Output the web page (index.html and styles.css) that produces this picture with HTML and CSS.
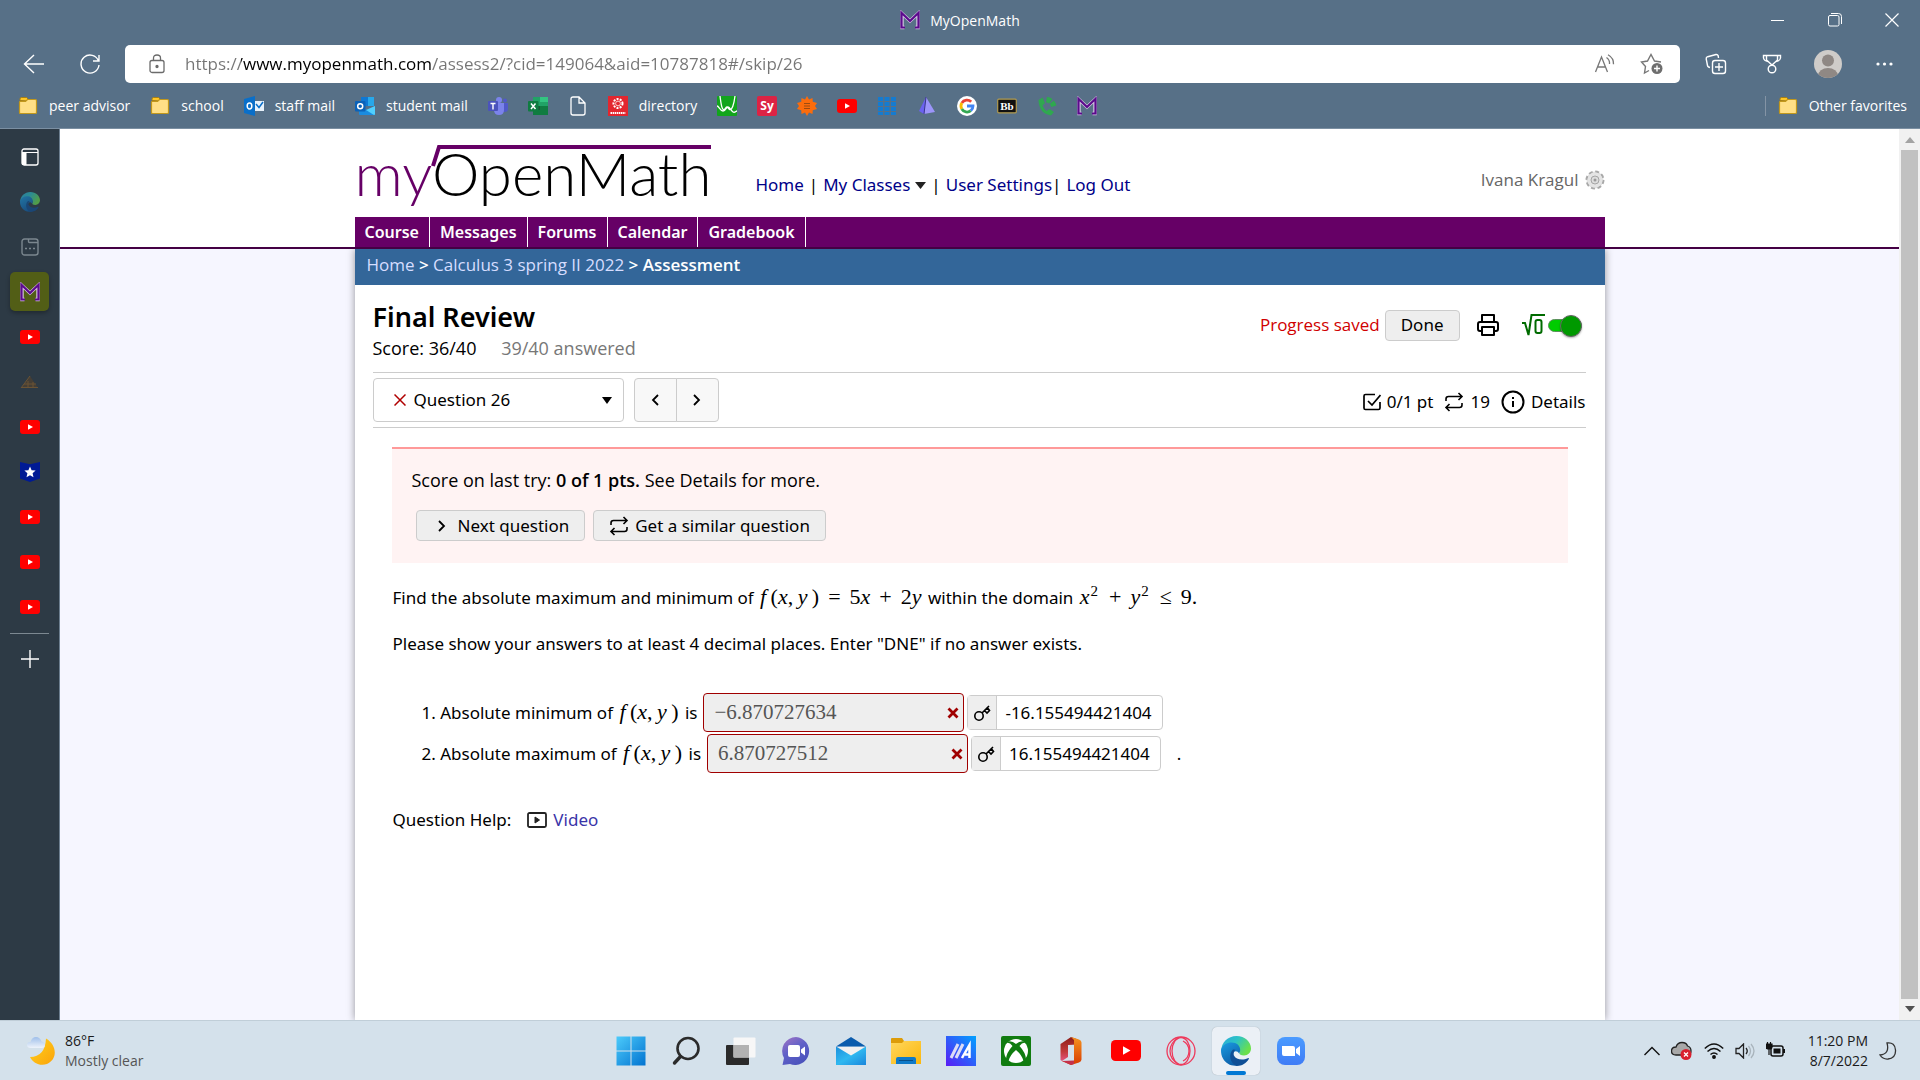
FILE: index.html
```html
<!DOCTYPE html>
<html lang="en">
<head>
    <meta charset="UTF-8">
    <meta name="viewport" content="width=device-width, initial-scale=1.0">
    <title>MyOpenMath</title>
    <link rel="stylesheet" href="styles.css">
</head>
<body>
    <!-- shared icons -->
    <svg class="defs" aria-hidden="true">
        <defs>
            <linearGradient id="edgeBlue" x1="0" y1="0" x2="0.6" y2="1">
                <stop offset="0" stop-color="#1b9de2"/><stop offset="1" stop-color="#0c59a4"/>
            </linearGradient>
            <linearGradient id="edgeGreen" x1="0" y1="0" x2="1" y2="0.5">
                <stop offset="0" stop-color="#2aa7dc"/><stop offset="0.5" stop-color="#2cc3c6"/><stop offset="1" stop-color="#6be04b"/>
            </linearGradient>
            <linearGradient id="winBlue" x1="0" y1="0" x2="1" y2="1">
                <stop offset="0" stop-color="#4ccbfb"/><stop offset="1" stop-color="#0273d0"/>
            </linearGradient>
            <linearGradient id="chatPurple" x1="0" y1="0" x2="0.6" y2="1">
                <stop offset="0" stop-color="#a475c4"/><stop offset="0.5" stop-color="#6161c8"/><stop offset="1" stop-color="#4b53bc"/>
            </linearGradient>
            <linearGradient id="mailBlue" x1="0" y1="0" x2="1" y2="1">
                <stop offset="0" stop-color="#1c8fdc"/><stop offset="0.5" stop-color="#2fb8f0"/><stop offset="1" stop-color="#1a86dc"/>
            </linearGradient>
            <linearGradient id="folderGold" x1="0" y1="0" x2="1" y2="1">
                <stop offset="0" stop-color="#ffd75e"/><stop offset="1" stop-color="#fbb70c"/>
            </linearGradient>
            <linearGradient id="pcBlue" x1="1" y1="0" x2="0" y2="1">
                <stop offset="0" stop-color="#00a2ff"/><stop offset="1" stop-color="#5a1bf5"/>
            </linearGradient>
            <linearGradient id="officeRed" x1="0" y1="0" x2="0" y2="1">
                <stop offset="0" stop-color="#8c1d18"/><stop offset="0.6" stop-color="#c23a3a"/><stop offset="1" stop-color="#e3547c"/>
            </linearGradient>
            <linearGradient id="officeOrange" x1="0" y1="0" x2="0" y2="1">
                <stop offset="0" stop-color="#f5941f"/><stop offset="1" stop-color="#d83b01"/>
            </linearGradient>
            <linearGradient id="zoomBlue" x1="0" y1="0" x2="0" y2="1">
                <stop offset="0" stop-color="#4a9bff"/><stop offset="1" stop-color="#3f7cf6"/>
            </linearGradient>
            <linearGradient id="moonGold" x1="0" y1="0" x2="1" y2="1">
                <stop offset="0" stop-color="#ffd21e"/><stop offset="1" stop-color="#fba30a"/>
            </linearGradient>
            <linearGradient id="cloudBlue" x1="0" y1="0" x2="0" y2="1">
                <stop offset="0" stop-color="#9fbfea"/><stop offset="1" stop-color="#eef3fb"/>
            </linearGradient>
        </defs>
        <symbol id="folder" viewBox="0 0 20 20">
            <path d="M2 4.500V3q0-1.500 1.500-1.500h5L10 3v2z" fill="#ffc727" stroke="#a98013"/>
            <path d="M2 5.500h5.500L9.500 3.500H17.500q1 0 1 1V16.500q0 1-1 1H2.500q-1 0-1-1V6q0-.5.5-.5z" fill="#ffdf86" stroke="#c1971c" stroke-width="1.200"/>
        </symbol>
        <symbol id="youtube" viewBox="0 0 30 21">
            <rect width="30" height="21" rx="4.500" fill="#f00"/>
            <path d="M12 6.200v8.600l7.500-4.300z" fill="#fff"/>
        </symbol>
        <symbol id="mom" viewBox="0 0 20 18">
            <path d="M4.500 16.500H2V2.500L10 10l8-7.500v14h-2.500" fill="none" stroke="#d9c9e6" stroke-width="3.400"/>
            <path d="M5 16.500H1.500V1.800L10 10l8.500-8.200v14.700H15" fill="none" stroke="#5b0a8c" stroke-width="2.200"/>
        </symbol>
        <symbol id="edge" viewBox="0 0 30 30">
            <path d="M.2 15C.2 6.500 7 0 15.500 0 24 0 30 6 30 12.500c0 4-3 7-7 7-3 0-5-1-4.500-2.500 1.500-3-.5-6.500-4.500-6.500C6 10.500 0 14 .2 15z" fill="url(#edgeGreen)"/>
            <path d="M.1 13.500C1.500 9 6 6.500 10.500 6.500c6 0 9.500 4 8.500 9-.3 1-.8 1.500-.6 2.200C16 14 12.500 14.500 12 18.500c-.5 6 6 9.500 11.500 8.300C15.500 32 6 30 2 22.500.3 19.500-.2 16 .1 13.500z" fill="url(#edgeBlue)"/>
            <path d="M12 13.500c-5 5-3 13.500 3.500 16.400 5.500 0 10-2.800 12.300-7 .3-.7-.3-1-1-.7-5 2.600-12 1.500-14-3-.6-2 .2-4.500 1.700-5.400z" fill="#0f4f96"/>
        </symbol>
        <symbol id="retry" viewBox="0 0 20 20">
            <path d="M2 9V7q0-2.500 2.500-2.500H18M14.500 1l3.500 3.500L14.500 8M18 11v2q0 2.500-2.500 2.500H2M5.500 12L2 15.500 5.500 19" fill="none" stroke="#000" stroke-width="1.600"/>
        </symbol>
        <symbol id="key" viewBox="0 0 18 18">
            <circle cx="6" cy="12" r="4.200" fill="none" stroke="#000" stroke-width="1.600"/>
            <path d="M9 9l7-7M11.500 6.500l2.500 2.500 2.500-2.500-2-2.500z" fill="none" stroke="#000" stroke-width="1.600"/>
        </symbol>
        <symbol id="wrong" viewBox="0 0 12 12">
            <path d="M1.500 1.500l9 9M10.500 1.500l-9 9" stroke="#a00000" stroke-width="2.800"/>
        </symbol>
    </svg>

    <header class="browser">
        <div class="titlebar">
            <div class="tab-title">
                <svg class="icon20"><use href="#mom"/></svg>
                <span>MyOpenMath</span>
            </div>
            <div class="window-controls">
                <button type="button" aria-label="Minimize"><svg width="13" height="13"><path d="M0 6.500h13" stroke="#fff"/></svg></button>
                <button type="button" aria-label="Restore"><svg width="14" height="14" fill="none" stroke="#fff"><rect x=".5" y="2.500" width="10.500" height="10.500" rx="1.500"/><path d="M3 .5h7.500q3 0 3 3V11"/></svg></button>
                <button type="button" aria-label="Close"><svg width="14" height="14"><path d="M.5.5l13 13M13.500.5l-13 13" stroke="#fff" stroke-width="1.200"/></svg></button>
            </div>
        </div>

        <div class="toolbar">
            <button type="button" class="tool" aria-label="Back"><svg width="22" height="20" fill="none" stroke="#fff" stroke-width="1.400"><path d="M21 10H1.500M11 1L1.500 10l9.500 9"/></svg></button>
            <button type="button" class="tool" aria-label="Refresh"><svg width="22" height="22" fill="none" stroke="#fff" stroke-width="1.400"><path d="M19.500 8A9 9 0 1 0 20 12M20 2v6h-6"/></svg></button>
            <div class="address">
                <svg class="lock" width="16" height="20" fill="none" stroke="#6b6b6b" stroke-width="1.300"><rect x="1" y="6.500" width="14" height="12" rx="2"/><path d="M4.500 6.500V4q0-3 3.500-3t3.500 3v2.500"/><circle cx="8" cy="12.500" r="1" fill="#6b6b6b"/></svg>
                <input type="text" class="url" aria-label="Address" value="https://www.myopenmath.com/assess2/?cid=149064&amp;aid=10787818#/skip/26">
                <svg width="22" height="20" fill="none" stroke="#777" stroke-width="1.300"><path d="M1.500 18L7.500 3l6 15M3.500 13h8M12.500 3.500q3.500 2.500 3 6.500M14 .8q6 3.500 5.500 9.500"/></svg>
                <svg class="star" width="24" height="22" fill="none" stroke="#777" stroke-width="1.400"><path d="M9 17.500L4.500 20l1-6.500L1.500 9l6-1L11 1.500 14.500 8l6.500 1"/><circle cx="17" cy="15.500" r="5.500" fill="#6e6e6e" stroke="none"/><path d="M17 12.500v6M14 15.500h6" stroke="#fff"/></svg>
            </div>
            <button type="button" class="tool" aria-label="Collections"><svg width="22" height="22" fill="none" stroke="#fff" stroke-width="1.400"><rect x="7.500" y="7.500" width="13" height="13" rx="2.500"/><path d="M14 10v8M10 14h8M5 14.500L3.500 14q-.8-.5-1-1.500L1.200 6q-.2-1.800 1.500-2.300L11 1.500q1.600-.2 2.200 1.300L13.500 5"/></svg></button>
            <button type="button" class="tool" aria-label="Rewards"><svg width="20" height="20" fill="none" stroke="#fff" stroke-width="1.400"><path d="M4.500 1.500h11V6L10 11 4.500 6zM4.500 1.500h-3V4q.5 3 4.500 3.500M15.500 1.500h3V4q-.5 3-4.500 3.500"/><circle cx="10" cy="15" r="3.800"/></svg></button>
            <button type="button" class="tool" aria-label="Profile"><svg width="28" height="28"><clipPath id="face"><circle cx="14" cy="14" r="14"/></clipPath><g clip-path="url(#face)"><rect width="28" height="28" fill="#cfccc9"/><circle cx="14" cy="10.500" r="6" fill="#8f8884"/><ellipse cx="14" cy="26" rx="10" ry="8" fill="#8f8884"/></g></svg></button>
            <button type="button" class="tool" aria-label="More"><svg width="17" height="4" fill="#fff"><circle cx="2" cy="2" r="1.600"/><circle cx="8.500" cy="2" r="1.600"/><circle cx="15" cy="2" r="1.600"/></svg></button>
        </div>

        <nav class="favorites">
            <a href="#"><svg class="icon20"><use href="#folder"/></svg>peer advisor</a>
            <a href="#"><svg class="icon20"><use href="#folder"/></svg>school</a>
            <a href="#"><svg class="icon20" viewBox="0 0 20 20"><path d="M0 3l11-3v20L0 17z" fill="#0a6fc9"/><path d="M11 5h9v10h-9z" fill="#e8f2fb"/><path d="M12 8l3 3.500L19 6" fill="none" stroke="#0a6fc9" stroke-width="1.500"/><ellipse cx="5.500" cy="10" rx="2.300" ry="3" fill="none" stroke="#fff" stroke-width="1.500"/></svg>staff mail</a>
            <a href="#"><svg class="icon20" viewBox="0 0 20 20"><path d="M6 1h13v9H6z" fill="#28a8ea"/><path d="M6 1h7v9H6z" fill="#0f78d4"/><path d="M4 10l8 4 8-4v8q0 1-1 1H5q-1 0-1-1z" fill="#1a8ce0"/><path d="M20 10v8q0 1-1 1L11 14z" fill="#50d0ff"/><rect y="5" width="10.500" height="10.500" rx="1" fill="#0b62b8"/><circle cx="5.200" cy="10.200" r="2.500" fill="none" stroke="#fff" stroke-width="1.500"/></svg>student mail</a>
            <a href="#" aria-label="Teams"><svg class="icon20" viewBox="0 0 20 20"><circle cx="11" cy="4" r="3" fill="#7b83eb"/><circle cx="17" cy="4.500" r="2" fill="#5059c9"/><path d="M13 7h7v6q0 3-3.500 3H13z" fill="#5059c9"/><path d="M6 7h10v7q0 5-5 5t-5-5z" fill="#7b83eb"/><rect y="5" width="10" height="10" rx="1" fill="#4b53bc"/><path d="M2.500 7.500h5M5 7.500v6" stroke="#fff" stroke-width="1.400"/></svg></a>
            <a href="#" aria-label="Excel"><svg class="icon20" viewBox="0 0 20 20"><path d="M5 1h7v9H5z" fill="#21a366"/><path d="M12 1h8v5h-8z" fill="#33c481"/><path d="M12 6h8v4h-8z" fill="#21a366"/><path d="M5 10h15v9H5z" fill="#107c41"/><path d="M5 10h7v4H5z" fill="#185c37"/><rect y="5" width="10.500" height="10.500" rx="1" fill="#107c41"/><path d="M3 7.500l4.500 5.500M7.500 7.500L3 13" stroke="#fff" stroke-width="1.500"/></svg></a>
            <a href="#" aria-label="Page"><svg class="icon20" viewBox="0 0 20 20"><path d="M3 3q0-2 2-2h6l6 6v10q0 2-2 2H5q-2 0-2-2zM11 1v6h6" fill="none" stroke="#fff" stroke-width="1.300"/></svg></a>
            <a href="#"><svg class="icon20" viewBox="0 0 20 20"><rect width="20" height="20" fill="#e3262e"/><circle cx="10" cy="7.500" r="4.500" fill="none" stroke="#fff" stroke-width="2" stroke-dasharray="2 1.200"/><circle cx="10" cy="7.500" r="2.400" fill="none" stroke="#fbd0d0"/><path d="M2.500 17h15" stroke="#fff" stroke-width="2.200" stroke-dasharray="1.500 .6"/></svg>directory</a>
            <a href="#" aria-label="Desmos"><svg class="icon20" viewBox="0 0 20 20"><rect width="20" height="20" rx="1" fill="#12a51c"/><path d="M3 0c1 8 2 15 4.500 13.500C9 12 9 11 10 11s1 1.500 2.500 2.500C15 15 17 8 18 0M0 10c2 0 3 5 6 5s3-4 5-4 3 4 5 5 3-1 4-1" fill="none" stroke="#fff" stroke-width="1.300"/></svg></a>
            <a href="#" aria-label="Symbolab"><svg class="icon20" viewBox="0 0 20 20"><rect width="20" height="20" rx="2" fill="#dc2344"/><text x="10" y="14" text-anchor="middle" class="sy">Sy</text></svg></a>
            <a href="#" aria-label="Wolfram Alpha"><svg class="icon20" viewBox="0 0 20 20"><path d="M10 0l2 3.500L15.500 2l.3 3.800L20 7l-2 3 2 3-4.200 1.200-.3 3.800L12 16.500 10 20l-2-3.500L4.500 18l-.3-3.800L0 13l2-3-2-3 4.200-1.200L4.500 2 8 3.500z" fill="#fb6c0c"/><path d="M7 7.500h6M7 10h6M7 12.500h6" stroke="#9c4a10" stroke-width="1.200"/></svg></a>
            <a href="#" aria-label="YouTube"><svg class="icon20"><use href="#youtube"/></svg></a>
            <a href="#" aria-label="Grid"><svg class="icon20" viewBox="0 0 20 20"><path d="M3.500 1v18M10 1v18M16.500 1v18" stroke="#157bd0" stroke-width="5" stroke-dasharray="4 1"/></svg></a>
            <a href="#" aria-label="Pyramid"><svg class="icon20" viewBox="0 0 20 20"><path d="M9 1L2 15l5 3z" fill="#6b62f0"/><path d="M9 1l9 15-11 2z" fill="#9c95fa"/><path d="M9 1L7 18" stroke="#3a3590"/></svg></a>
            <a href="#" aria-label="Google"><svg class="icon20" viewBox="0 0 20 20"><circle cx="10" cy="10" r="10" fill="#fff"/><g fill="none" stroke-width="2.800"><path d="M14.200 5.800A6 6 0 0 0 4.800 7" stroke="#ea4335"/><path d="M4.800 7a6 6 0 0 0 0 6" stroke="#fbbc05"/><path d="M4.800 13a6 6 0 0 0 9 1.700" stroke="#34a853"/><path d="M13.800 14.700A6 6 0 0 0 16 10h-6" stroke="#4285f4"/></g></svg></a>
            <a href="#" aria-label="Blackboard"><svg class="icon20" viewBox="0 0 20 20"><rect x=".7" y="3.200" width="18.600" height="13.600" rx="1" fill="#111" stroke="#b19a4f" stroke-width="1.200"/><text x="10" y="14" text-anchor="middle" class="bb">Bb</text></svg></a>
            <a href="#" aria-label="Phone"><svg class="icon20" viewBox="0 0 20 20"><path d="M1.500 4L5.500 1.500 8 7 5.500 9.500q1.500 3.500 4 5.500l3-2 4.500 3-3 3.500Q2 17.500 1.500 4z" fill="#2fa84f"/><path d="M9.500 3.500q6 1 7.500 7.500" fill="none" stroke="#2fa84f" stroke-width="5.500" stroke-dasharray="4.500 1.500"/></svg></a>
            <a href="#" aria-label="MyOpenMath"><svg class="icon20"><use href="#mom"/></svg></a>
            <a href="#" class="other"><svg class="icon20"><use href="#folder"/></svg>Other favorites</a>
        </nav>
    </header>

    <div class="workspace">
        <aside class="tabs">
            <button type="button" aria-label="Tab actions"><svg width="18" height="18" viewBox="0 0 18 18"><rect x="1" y="1" width="16" height="16" rx="2" fill="none" stroke="#fff" stroke-width="1.300"/><path d="M1 4.500h16M3 5v12" stroke="#fff"/><path d="M1 5h4.500v12H1z" fill="#fff"/></svg></button>
            <button type="button" class="asleep" aria-label="Edge"><svg class="icon20"><use href="#edge"/></svg></button>
            <button type="button" aria-label="New tab"><svg width="18" height="18" fill="none" stroke="#7b878f" stroke-width="1.400"><rect x="1" y="1" width="16" height="16" rx="2.500"/><path d="M7.500 1v2.500q0 1 1 1H17M4 10.500h2M8 10.500h2M12 10.500h2"/></svg></button>
            <button type="button" class="active" aria-label="MyOpenMath"><svg class="icon20"><use href="#mom"/></svg></button>
            <button type="button" aria-label="YouTube"><svg class="icon20"><use href="#youtube"/></svg></button>
            <button type="button" aria-label="Pyramids"><svg width="20" height="16"><path d="M1 14L10 2l8 12z" fill="#453e35"/><path d="M1 14L10 2M4 10h12M1 13.500h17M8 7v6M13 8v5" stroke="#6a5334" fill="none"/></svg></button>
            <button type="button" aria-label="YouTube"><svg class="icon20"><use href="#youtube"/></svg></button>
            <button type="button" aria-label="Badge"><svg class="icon20" viewBox="0 0 20 20"><path d="M0 0l10 2.200L20 0v16.500L10 20 0 16.500z" fill="#001a94"/><path d="M10 4.500l1.600 3.800 4 .3-3 2.700.9 4L10 13.200l-3.500 2.100.9-4-3-2.700 4-.3z" fill="#fff"/></svg></button>
            <button type="button" aria-label="YouTube"><svg class="icon20"><use href="#youtube"/></svg></button>
            <button type="button" aria-label="YouTube"><svg class="icon20"><use href="#youtube"/></svg></button>
            <button type="button" aria-label="YouTube"><svg class="icon20"><use href="#youtube"/></svg></button>
            <hr>
            <button type="button" aria-label="Add tab"><svg width="18" height="18"><path d="M0 9h18M9 0v18" stroke="#fff" stroke-width="1.400"/></svg></button>
        </aside>

        <main class="page">
            <div class="page-head">
                <div class="wrap">
                    <div class="brand-row">
                        <a href="#" class="logo"><svg class="radical" viewBox="0 0 280 24"><path d="M2 22L8 3H280" fill="none" stroke="#660066" stroke-width="4"/></svg><span>my</span>OpenMath</a>
                        <div class="links">
                            <a href="#">Home</a> <span>|</span>
                            <a href="#" class="drop">My Classes <svg width="11" height="7"><path d="M0 0h11L5.500 7z" fill="#222"/></svg></a>
                            <span>|</span> <span><a href="#">User Settings</a>|</span> <a href="#">Log Out</a>
                        </div>
                        <div class="user">Ivana Kragul
                            <svg width="20" height="20" viewBox="0 0 20 20"><circle cx="10" cy="10" r="8.500" fill="#e0e0e0" stroke="#a8a8a8" stroke-width="2" stroke-dasharray="4 2.670"/><circle cx="10" cy="10" r="7.500" fill="#e4e4e4"/><circle cx="10" cy="10" r="4" fill="#ddd" stroke="#a5a5a5"/><circle cx="10" cy="10" r="1.500" fill="#999"/></svg>
                        </div>
                    </div>
                    <nav class="course-nav">
                        <a href="#">Course</a><a href="#">Messages</a><a href="#">Forums</a><a href="#">Calendar</a><a href="#">Gradebook</a>
                    </nav>
                </div>
            </div>

            <div class="wrap sheet">
                <div class="breadcrumb"><a href="#">Home</a> &gt; <a href="#">Calculus 3 spring II 2022</a> &gt; Assessment</div>
                <div class="assess">
                    <div class="assess-head">
                        <div>
                            <h1>Final Review</h1>
                            <p class="score">Score: 36/40 <span>39/40 answered</span></p>
                        </div>
                        <div class="assess-tools">
                            <span class="saved">Progress saved</span>
                            <button type="button" class="btn">Done</button>
                            <button type="button" class="plain" aria-label="Print"><svg width="24" height="24" viewBox="0 0 24 24" fill="none" stroke="#000" stroke-width="2" stroke-linejoin="round"><path d="M6 9V2h12v7M6 18H4a2 2 0 0 1-2-2v-5a2 2 0 0 1 2-2h16a2 2 0 0 1 2 2v5a2 2 0 0 1-2 2h-2"/><rect x="6" y="14" width="12" height="8"/></svg></button>
                            <label class="mq"><svg width="24" height="24" fill="none" stroke="#006b00" stroke-width="2"><path d="M1 10h3l3.500 12L10.500 2H24"/><rect x="14.500" y="7" width="6" height="13" rx="2"/></svg><input type="checkbox" checked aria-label="Equation editor"></label>
                        </div>
                    </div>

                    <div class="question-bar">
                        <div class="picker">
                            <svg class="mark" width="12" height="12"><path d="M.5.5l11 11M11.500.5l-11 11" stroke="#b00000" stroke-width="1.500"/></svg>
                            <select aria-label="Question"><option>Question 26</option></select>
                            <svg class="caret" width="10" height="7"><path d="M0 0h10L5 7z"/></svg>
                        </div>
                        <div class="pager">
                            <button type="button" aria-label="Previous"><svg width="8" height="12"><path d="M7 1L2 6l5 5" fill="none" stroke="#000" stroke-width="1.800"/></svg></button><button type="button" aria-label="Next"><svg width="8" height="12"><path d="M1 1l5 5-5 5" fill="none" stroke="#000" stroke-width="1.800"/></svg></button>
                        </div>
                        <div class="meta">
                            <svg width="18" height="18" fill="none" stroke="#000" stroke-width="1.700"><path d="M17 9v6q0 1.500-1.500 1.500h-13Q1 16.500 1 15V3q0-1.500 1.500-1.500H12M5 8l4 4 8.500-10"/></svg>
                            <span>0/1 pt</span>
                            <svg class="tries" width="20" height="20"><use href="#retry"/></svg>
                            <span>19</span>
                            <button type="button" class="plain details"><svg width="24" height="24" fill="none" stroke="#000" stroke-width="2"><circle cx="12" cy="12" r="10.500"/><path d="M12 11v6M12 7v2"/></svg>Details</button>
                        </div>
                    </div>

                    <div class="notice">
                        <p>Score on last try: <b>0 of 1 pts.</b> See Details for more.</p>
                        <div class="actions">
                            <button type="button" class="btn"><svg class="chev" width="8" height="12"><path d="M1 1l5 5-5 5" fill="none" stroke="#000" stroke-width="1.800"/></svg>Next question</button>
                            <button type="button" class="btn"><svg width="20" height="20"><use href="#retry"/></svg>Get a similar question</button>
                        </div>
                    </div>

                    <div class="question">
                        <p>Find the absolute maximum and minimum of <span class="math"><i>f</i>&thinsp;(<i>x</i>,&thinsp;<i>y</i>&thinsp;)<span class="op">=</span>5<i>x</i><span class="op">+</span>2<i>y</i></span> within the domain <span class="math"><i>x</i><sup>2</sup><span class="op">+</span><i>y</i><sup>2</sup><span class="op">≤</span>9.</span></p>
                        <p>Please show your answers to at least 4 decimal places. Enter "DNE" if no answer exists.</p>
                        <ol class="answers">
                            <li>
                                <label for="ans1">1. Absolute minimum of <span class="math"><i>f</i>&thinsp;(<i>x</i>,&thinsp;<i>y</i>&thinsp;)</span> is</label>
                                <div class="answer"><input type="text" id="ans1" value="−6.870727634" readonly><svg width="12" height="12"><use href="#wrong"/></svg></div>
                                <div class="solution"><span class="key"><svg width="18" height="18"><use href="#key"/></svg></span><span>-16.155494421404</span></div>
                            </li>
                            <li>
                                <label for="ans2">2. Absolute maximum of <span class="math"><i>f</i>&thinsp;(<i>x</i>,&thinsp;<i>y</i>&thinsp;)</span> is</label>
                                <div class="answer"><input type="text" id="ans2" value="6.870727512" readonly><svg width="12" height="12"><use href="#wrong"/></svg></div>
                                <div class="solution"><span class="key"><svg width="18" height="18"><use href="#key"/></svg></span><span>16.155494421404</span></div>
                                <span class="stop">.</span>
                            </li>
                        </ol>
                        <p class="help">Question Help: <a href="#"><svg width="20" height="16" fill="none" stroke="#222" stroke-width="1.800"><rect x="1" y="1" width="18" height="14" rx="1.500"/><path d="M8 5v6l4.500-3z" fill="#222" stroke-width="1"/></svg>Video</a></p>
                    </div>
                </div>
            </div>
        </main>

        <div class="scrollbar">
            <svg width="10" height="6"><path d="M0 6h10L5 0z" fill="#a3a3a3"/></svg>
            <div class="thumb"></div>
            <svg width="10" height="6"><path d="M0 0h10L5 6z" fill="#505050"/></svg>
        </div>
    </div>

    <footer class="taskbar">
        <div class="weather">
            <svg width="28" height="28" viewBox="0 0 28 28"><path d="M19 1.500C30 8 31 22 20 27 13 29.500 6 26 3 20q15 0 16-18.500z" fill="url(#moonGold)"/><path d="M4 11q-4 0-4-3t3.500-3Q5 0 9 0t5.500 4.500Q18 5 18 8t-3.500 3z" fill="url(#cloudBlue)"/></svg>
            <div><span>86°F</span><span class="sub">Mostly clear</span></div>
        </div>
        <div class="apps">
            <button type="button" aria-label="Start"><svg width="30" height="30"><path d="M.5.5h14v14H.5zM15.500.5h14v14h-14zM.5 15.500h14v14H.5zM15.500 15.500h14v14h-14z" fill="url(#winBlue)"/></svg></button>
            <button type="button" aria-label="Search"><svg width="30" height="30" fill="none" stroke="#2b2b2b" stroke-linecap="round"><circle cx="17" cy="12.500" r="10.500" stroke-width="2.600"/><path d="M9.500 20.500l-6 6.500" stroke-width="3.400"/></svg></button>
            <button type="button" aria-label="Task view"><svg width="30" height="30"><rect x="0" y="9" width="23" height="20" rx="1" fill="#2a2a2a"/><rect x="7.500" y="1.500" width="22" height="20" rx="1" fill="#f7f7f7"/><rect x="7.500" y="9" width="15.500" height="12.500" fill="#b2b2b2"/></svg></button>
            <button type="button" aria-label="Chat"><svg width="30" height="30"><path d="M15 1a14 14 0 1 1-6 27l-7.500 1L3 22A14 14 0 0 1 15 1z" fill="url(#chatPurple)"/><rect x="7" y="9" width="12" height="12" rx="2" fill="#fff"/><path d="M20 13.500l4-3v9l-4-3z" fill="#fff"/></svg></button>
            <button type="button" aria-label="Mail"><svg width="30" height="30"><path d="M0 10.500L15 1l15 9.500z" fill="#0b5cad"/><path d="M2 11h26L15 21z" fill="#f1f1f1"/><path d="M0 10.500l15 9 15-9V29H0z" fill="url(#mailBlue)"/></svg></button>
            <button type="button" aria-label="File Explorer"><svg width="30" height="30"><path d="M0 3q0-1 1-1h10l2 3v3H0z" fill="#dd9c09"/><path d="M0 7h11l2-2h17v23H0z" fill="url(#folderGold)"/><path d="M5 28v-5q0-2 2-2h16q2 0 2 2v5z" fill="#0f7ac8"/><path d="M8 24.500h14" stroke="#084f87"/></svg></button>
            <button type="button" aria-label="Optimizer"><svg width="30" height="30"><rect width="30" height="30" fill="url(#pcBlue)"/><path d="M5 22l7-14M10 22l7-14" stroke="#dcdcf6" stroke-width="3"/><path d="M16 22l7.500-13v13M19 18.500h4" fill="none" stroke="#fff" stroke-width="2.500"/></svg></button>
            <button type="button" aria-label="Xbox"><svg width="30" height="30"><rect width="30" height="30" rx="2" fill="#107c10"/><circle cx="15" cy="15" r="12" fill="#fff"/><path d="M7 5.500q4-1 8 2.500 4-3.500 8-2.500l1.500 1.500q-3-1-6 3 6 6.500 6.500 13l-2.500 2Q21 19 15 14 9 19 7.500 25L5 23q.5-6.500 6.500-13-3-4-6-3z" fill="#107c10"/></svg></button>
            <button type="button" aria-label="Office"><svg width="30" height="30"><path d="M15 1l7 2.500v5L12 9v12l-6 4-1.500-1V8z" fill="url(#officeRed)"/><path d="M15 1l8 2.500q2.500 1 2.500 3v17q0 2-2.500 3L15 29l-9-4h12V4z" fill="url(#officeOrange)"/><path d="M6 25l9 4 3-1v-3.500z" fill="#c4314b"/></svg></button>
            <button type="button" aria-label="YouTube"><svg width="30" height="21"><use href="#youtube"/></svg></button>
            <button type="button" aria-label="Opera GX"><svg width="30" height="30" fill="none" stroke="#ee3a5c" stroke-width="1.300"><circle cx="15" cy="15" r="14"/><ellipse cx="15" cy="15" rx="9" ry="13.500"/><path d="M17 5q6 3 6 10t-6 10M13 1.500q-9 5-9 13.500t9 13.500"/></svg></button>
            <button type="button" class="current" aria-label="Edge"><svg width="30" height="30"><use href="#edge"/></svg></button>
            <button type="button" aria-label="Zoom"><svg width="28" height="28"><rect width="28" height="28" rx="8" fill="url(#zoomBlue)"/><path d="M5 9h11q2 0 2 2v8H7q-2 0-2-2zM19 12l4-3v10l-4-3z" fill="#fff"/></svg></button>
        </div>
        <div class="tray">
            <svg width="16" height="10"><path d="M.5 9L8 1.500 15.500 9" fill="none" stroke="#111" stroke-width="1.400"/></svg>
            <svg width="22" height="20"><path d="M5 14q-4.500 0-4.500-4T5 6q1.500-4.500 6-4.500T16.500 5Q20 6 20 10q0 4-3 4z" fill="#a8a8a8" stroke="#222" stroke-width="1.300"/><circle cx="15" cy="13.500" r="5.500" fill="#d9202e"/><path d="M13 11.500l4 4M17 11.500l-4 4" stroke="#fff" stroke-width="1.300"/></svg>
            <svg width="20" height="16" fill="none" stroke="#111" stroke-width="1.500"><path d="M.8 5.500q9.200-9 18.400 0M3.500 8.500q6.500-6 13 0M6.500 11.500q3.500-3 7 0"/><circle cx="10" cy="14" r="1.200" fill="#111"/></svg>
            <svg width="20" height="16" fill="none" stroke="#222" stroke-width="1.300"><path d="M1 5.500h3L8.500 1v14L4 10.500H1zM11 5q2.500 3 0 6"/><path d="M13.500 3q4 5 0 10M16 1q6 7 0 14" stroke="#a9b4bc"/></svg>
            <svg width="20" height="18"><rect x="5" y="4" width="12" height="10" rx="2" fill="none" stroke="#111" stroke-width="1.500"/><rect x="7.500" y="6.500" width="7" height="5" fill="#111"/><path d="M18 7v4" stroke="#111" stroke-width="2"/><path d="M0 2h6v3q0 2-3 2T0 5zM1.500 0v2M4.500 0v2M3 7v6" stroke="#111" fill="#111" stroke-width="1.200"/></svg>
            <div class="clock"><span>11:20 PM</span><span>8/7/2022</span></div>
            <svg width="18" height="18"><path d="M8 1q8-1 8.500 7T9 17q-5 .5-8-4 10-1 7-12z" fill="none" stroke="#333" stroke-width="1.300"/></svg>
        </div>
    </footer>
</body>
</html>
```
FILE: styles.css
```css
* {
    box-sizing: border-box;
}

body {
    margin: 0;
    height: 100vh;
    display: flex;
    flex-direction: column;
    overflow: hidden;
    font-family: "Open Sans", sans-serif;
    font-size: 14px;
}

svg {
    display: block;
    flex: none;
}

button {
    font: inherit;
    color: inherit;
    padding: 0;
    border: 0;
    background: none;
    display: flex;
    align-items: center;
    justify-content: center;
}

a {
    text-decoration: none;
}

.defs {
    position: absolute;
    width: 0;
    height: 0;
}

.icon20 {
    width: 20px;
    height: 20px;
}

/* browser chrome */
.browser {
    background-color: #577087;
    color: white;
    border-bottom: 1px solid #7b8fa2;
    flex: none;
}

.titlebar {
    display: grid;
    grid-template-columns: 1fr auto 1fr;
    height: 40px;
}

.tab-title {
    grid-column: 2;
    display: flex;
    align-items: center;
    gap: 10px;
}

.window-controls {
    display: flex;
    justify-content: flex-end;
}

.window-controls button {
    width: 57px;
}

.toolbar {
    display: flex;
    align-items: center;
    height: 48px;
    padding: 0 8px 0 6px;
}

.tool {
    width: 56px;
    height: 38px;
}

.address {
    flex: 1;
    display: flex;
    align-items: center;
    height: 38px;
    margin: 0 8px 0 7px;
    padding: 0 16px 0 24px;
    background-color: white;
    border-radius: 5px;
}

.url {
    flex: 1;
    margin-left: 20px;
    padding: 0 0 2px;
    border: 0;
    outline: 0;
    font: 17px "Open Sans", sans-serif;
    color: transparent;
    /* scheme and path in grey, host in black */
    background: linear-gradient(90deg, #757575 56px, #000 56px, #000 247px, #757575 247px);
    -webkit-background-clip: text;
    background-clip: text;
}

.star {
    margin-left: 24px;
}

.favorites {
    display: flex;
    align-items: center;
    gap: 20px;
    height: 40px;
    padding: 0 13px 5px 18px;
}

.favorites a {
    display: flex;
    align-items: center;
    gap: 11px;
    color: white;
}

.favorites .other {
    margin-left: auto;
    padding-left: 12px;
    border-left: 1px solid #8494a5;
}

.sy {
    font: bold 12px "Open Sans", sans-serif;
    fill: white;
}

.bb {
    font: bold 11px "Liberation Serif", serif;
    fill: white;
}

.workspace {
    flex: 1;
    display: flex;
    min-height: 0;
}

.tabs {
    width: 60px;
    background-color: #2d3a45;
    border-right: 1px solid #6d7f90;
    padding-top: 5px;
    display: flex;
    flex-direction: column;
    align-items: center;
}

.tabs button {
    width: 39px;
    height: 39px;
    margin: 3px 0;
    border-radius: 5px;
}

.tabs .asleep {
    opacity: 0.6;
}

.tabs .active {
    background-color: #525e16;
    box-shadow: 0 2px 4px rgba(0,0,0,0.3);
}

.tabs hr {
    width: 39px;
    margin: 4px 0 2px;
    border: 0;
    border-top: 1px solid #7c8891;
}

/* page */
.page {
    flex: 1;
    display: flex;
    flex-direction: column;
    background-color: #f6f6ff;
    font-family: "Noto Sans", sans-serif;
    font-size: 17px;
    line-height: 24px;
    color: black;
}

.wrap {
    width: 100%;
    max-width: 1250px;
    margin: 0 auto;
}

.page-head {
    background-color: white;
    border-bottom: 2px solid #440044;
}

.brand-row {
    display: flex;
    align-items: center;
    height: 88px;
}

.logo {
    position: relative;
    font-family: Lato, sans-serif;
    font-size: 60px;
    font-weight: 300;
    line-height: 64px;
    color: black;
}

.logo span {
    color: #660066;
}

.radical {
    position: absolute;
    right: 0;
    top: 3px;
    width: 280px;
    height: 24px;
}

.links {
    display: flex;
    align-items: center;
    gap: 5px;
    margin: 24px 0 0 44px;
}

.links a {
    color: #000088;
}

.drop {
    display: flex;
    align-items: center;
    gap: 5px;
}

.user {
    display: flex;
    align-items: center;
    gap: 6px;
    margin: 13px 0 0 auto;
    font-family: "Open Sans", sans-serif;
    color: #666;
}

.course-nav {
    display: flex;
    height: 30px;
    background-color: #660066;
}

.course-nav a {
    padding: 3px 10px;
    border-right: 1px solid white;
    color: white;
    font-size: 16px;
    font-weight: 600;
}

.sheet {
    flex: 1;
    background-color: white;
    box-shadow: 0 0 8px rgba(0,0,0,0.4);
    clip-path: inset(0 -10px 0 -10px);
}

.breadcrumb {
    height: 36px;
    padding: 4px 12px;
    background-color: #336699;
    color: white;
    font-family: "Open Sans", sans-serif;
    font-weight: 600;
}

.breadcrumb a {
    color: #d6ddff;
    font-weight: 400;
}

.assess {
    padding: 0 19px 0 18px;
}

.assess-head {
    display: flex;
    justify-content: space-between;
    height: 87px;
    padding-top: 15px;
}

h1 {
    margin: 0 0 2px;
    font-size: 27px;
    font-weight: 600;
    line-height: 34px;
}

.score,
.notice p {
    font-family: "Open Sans", sans-serif;
    font-size: 18px;
    margin: 0;
}

.score span {
    margin-left: 20px;
    color: #777;
}

.assess-tools {
    display: flex;
    align-items: center;
    height: 50px;
}

.saved {
    color: #d00000;
    font-family: "Open Sans", sans-serif;
    margin-right: 5px;
}

.btn {
    height: 31px;
    padding: 0 15px;
    gap: 6px;
    border: 1px solid #ccc;
    border-radius: 4px;
    background-color: #eee;
}

.plain {
    margin: 0 16px;
}

.mq {
    display: flex;
    align-items: center;
    gap: 3px;
    margin: 0 4px 0 5px;
}

.mq input {
    appearance: none;
    position: relative;
    width: 34px;
    height: 13px;
    margin: 0;
    border: 1px solid #5c8f5c;
    border-radius: 7px;
    background-color: #00cc00;
}

.mq input::after {
    content: "";
    position: absolute;
    right: -1px;
    top: -5px;
    width: 20px;
    height: 20px;
    border: 1px solid #666;
    border-radius: 50%;
    background-color: #009900;
    box-shadow: 0 1px 2px rgba(0,0,0,0.3);
}

.question-bar {
    display: flex;
    align-items: center;
    height: 56px;
    border-top: 1px solid #ccc;
    border-bottom: 1px solid #ccc;
}

.picker {
    position: relative;
    margin-right: 10px;
}

.picker select {
    appearance: none;
    width: 251px;
    height: 44px;
    padding: 0 40px;
    border: 1px solid #ccc;
    border-radius: 4px;
    background-color: white;
    font: inherit;
    color: black;
}

.mark,
.caret {
    position: absolute;
    top: 16px;
    pointer-events: none;
}

.mark {
    left: 21px;
}

.caret {
    right: 12px;
    top: 19px;
}

.pager {
    display: flex;
}

.pager button {
    width: 43px;
    height: 44px;
    border: 1px solid #ccc;
    background-color: #f8f8f8;
}

.pager button:first-child {
    border-radius: 4px 0 0 4px;
}

.pager button:last-child {
    margin-left: -1px;
    border-radius: 0 4px 4px 0;
}

.meta {
    display: flex;
    align-items: center;
    gap: 6px;
    margin-left: auto;
    padding-top: 3px;
}

.tries {
    margin-left: 5px;
}

.details {
    gap: 6px;
    margin: 0 0 0 5px;
}

.notice {
    margin: 19px 18px 0 19px;
    padding: 19px 20px;
    height: 116px;
    background-color: #fff3f3;
    border-top: 2px solid #ff9999;
}

.notice p {
    margin: 0 0 18px;
}

.notice b {
    font-weight: 600;
}

.actions {
    display: flex;
    gap: 8px;
    margin-left: 4px;
}

.chev {
    margin: 0 6px;
}

.question {
    padding: 22px 20px;
}

.question p {
    margin: 0 0 22px;
}

.math {
    margin: 0 2px;
    font-family: "Liberation Serif", serif;
    font-size: 22px;
    line-height: 24px;
}

.math sup {
    margin: 0 2px 0 1px;
    font-size: 15px;
    line-height: 0;
}

.op {
    margin: 0 9px;
}

.answers {
    list-style: none;
    margin: 36px 0 0;
    padding: 0 0 0 29px;
}

.answers li {
    display: flex;
    align-items: center;
    height: 41px;
}

.answer {
    position: relative;
    margin: 0 3px 0 6px;
}

.answer input {
    display: block;
    width: 261px;
    height: 39px;
    padding: 0 30px 1px 10px;
    border: 1px solid #a00000;
    border-radius: 4px;
    background-color: #eee;
    color: #555;
    font: 21px "Liberation Serif", serif;
}

.answer svg {
    position: absolute;
    right: 5px;
    top: 14px;
}

.solution {
    display: flex;
    align-items: center;
    height: 35px;
    padding-right: 10px;
    border: 1px solid #ccc;
    border-radius: 4px;
}

.key {
    display: flex;
    align-items: center;
    height: 33px;
    margin-right: 8px;
    padding: 0 5px;
    border-right: 1px solid #ccc;
    background-color: #eee;
}

.stop {
    margin-left: 16px;
}

.question .help {
    display: flex;
    gap: 16px;
    margin: 34px 0 0;
}

.help a {
    display: flex;
    align-items: center;
    gap: 6px;
    color: #3a34a8;
}

.scrollbar {
    width: 21px;
    padding: 8px 2px;
    background-color: #f1f1f1;
    display: flex;
    flex-direction: column;
    align-items: center;
    gap: 7px;
}

.thumb {
    flex: 1;
    width: 17px;
    background-color: #c1c1c1;
}

/* taskbar */
.taskbar {
    flex: none;
    display: grid;
    grid-template-columns: 1fr auto 1fr;
    align-items: center;
    height: 60px;
    padding: 0 23px 0 24px;
    background-color: #d4e1eb;
    border-top: 1px solid #c0ced8;
    color: #1a1a1a;
    line-height: 20px;
}

.weather {
    display: flex;
    align-items: center;
    gap: 10px;
    margin-left: 3px;
}

.weather span,
.clock span {
    display: block;
}

.weather .sub {
    color: #555;
}

.apps {
    display: flex;
    gap: 7px;
}

.apps button {
    width: 48px;
    height: 48px;
    border-radius: 5px;
}

.apps .current {
    position: relative;
    background-color: #ebf0f6;
    box-shadow: 0 0 1px rgba(0,0,0,0.3);
}

.current::after {
    content: "";
    position: absolute;
    left: 14px;
    bottom: 0;
    width: 20px;
    height: 4px;
    border-radius: 2px;
    background-color: #0078d4;
}

.tray {
    display: flex;
    align-items: center;
    justify-content: flex-end;
    gap: 11px;
}

.clock {
    text-align: right;
    margin-left: 11px;
}
```
